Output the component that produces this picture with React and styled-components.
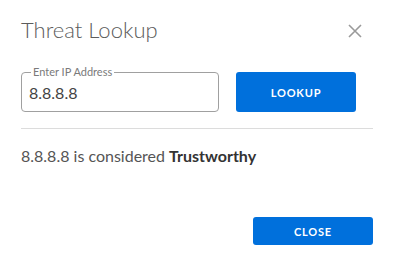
import React from "react";
import styled, { createGlobalStyle } from "styled-components";

const GlobalStyle = createGlobalStyle`
  body {
    margin: 0;
    background: #ffffff;
    font-family: Lato, "Open Sans", sans-serif;
  }
`;

const Dialog = styled.div`
  width: 394px;
  height: 267px;
  box-sizing: border-box;
  padding: 0 21px;
  display: flex;
  flex-direction: column;
`;

const Header = styled.div`
  display: flex;
  align-items: flex-start;
  justify-content: space-between;
  height: 67px;
  box-sizing: border-box;
  padding-top: 17px;
`;

const Title = styled.h2`
  margin: 0;
  font-size: 22px;
  line-height: 26px;
  font-weight: 300;
  color: #5c5c5c;
`;

const IconButton = styled.button`
  border: none;
  background: none;
  padding: 0;
  margin: 7px 11px 0 0;
  width: 14px;
  height: 14px;
  cursor: pointer;
  display: flex;
`;

const SearchRow = styled.div`
  display: flex;
  align-items: flex-end;
  gap: 17px;
`;

const Field = styled.fieldset`
  margin: 0;
  width: 198px;
  height: 45px;
  box-sizing: border-box;
  border: 1px solid #a0a0a0;
  border-radius: 4px;
  padding: 0 7px;
`;

const Legend = styled.legend`
  font-size: 11px;
  color: #7a7a7a;
  padding: 0 2px;
  margin-left: 2px;
  line-height: 10px;
`;

const Input = styled.input`
  border: none;
  outline: none;
  width: 100%;
  font-family: inherit;
  font-size: 16px;
  color: #444;
  padding: 6px 0 0 0;
  background: transparent;
`;

const Button = styled.button`
  width: 120px;
  height: ${(p) => p.$height}px;
  border: none;
  border-radius: 3px;
  background: #0070dc;
  color: #ffffff;
  font-family: inherit;
  font-size: 11px;
  font-weight: 700;
  letter-spacing: 0.8px;
  cursor: pointer;
`;

const Divider = styled.hr`
  border: none;
  border-top: 1px solid #dcdcdc;
  margin: 16px 0 0 0;
`;

const Result = styled.p`
  margin: 17px 0 0 0;
  font-size: 16px;
  color: #555;

  strong {
    color: #333;
    font-weight: 700;
  }
`;

const Footer = styled.div`
  display: flex;
  justify-content: flex-end;
  margin-top: 52px;
`;

export default function App() {
  return (
    <>
      <GlobalStyle />
      <Dialog>
        <Header>
          <Title>Threat Lookup</Title>
          <IconButton aria-label="close">
            <svg width="14" height="14" viewBox="0 0 14 14">
              <path d="M1 1 L13 13 M13 1 L1 13" stroke="#9a9a9a" strokeWidth="1.6" />
            </svg>
          </IconButton>
        </Header>
        <SearchRow>
          <Field>
            <Legend>Enter IP Address</Legend>
            <Input defaultValue="8.8.8.8" />
          </Field>
          <Button $height={40}>LOOKUP</Button>
        </SearchRow>
        <Divider />
        <Result>
          8.8.8.8 is considered <strong>Trustworthy</strong>
        </Result>
        <Footer>
          <Button $height={28}>CLOSE</Button>
        </Footer>
      </Dialog>
    </>
  );
}
